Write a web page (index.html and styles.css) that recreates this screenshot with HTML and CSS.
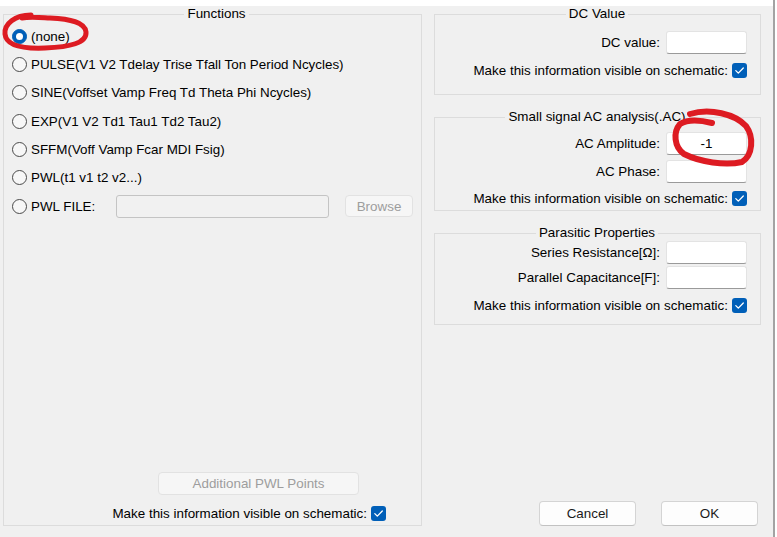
FILE: index.html
```html
<!DOCTYPE html>
<html>
<head>
<meta charset="utf-8">
<link rel="stylesheet" href="styles.css">
</head>
<body>
<div class="main">
  <div class="topstrip"></div>
  <div class="dialog">
    <fieldset class="group functions">
      <legend>Functions</legend>
      <div class="radios">
        <div class="radio-row"><span class="radio checked"></span><span>(none)</span></div>
        <div class="radio-row"><span class="radio"></span><span>PULSE(V1 V2 Tdelay Trise Tfall Ton Period Ncycles)</span></div>
        <div class="radio-row"><span class="radio"></span><span>SINE(Voffset Vamp Freq Td Theta Phi Ncycles)</span></div>
        <div class="radio-row"><span class="radio"></span><span>EXP(V1 V2 Td1 Tau1 Td2 Tau2)</span></div>
        <div class="radio-row"><span class="radio"></span><span>SFFM(Voff Vamp Fcar MDI Fsig)</span></div>
        <div class="radio-row"><span class="radio"></span><span>PWL(t1 v1 t2 v2...)</span></div>
        <div class="radio-row"><span class="radio"></span><span class="file-label">PWL FILE:</span><span class="file-input"></span><span class="btn disabled browse">Browse</span></div>
      </div>
      <div class="func-bottom">
        <span class="btn disabled addpwl">Additional PWL Points</span>
        <div class="check-row bottom-check"><span>Make this information visible on schematic:</span><span class="check"><svg viewBox="0 0 15 15" width="15" height="15"><path d="M3.8 7.6 L6.3 10.1 L11.3 5" fill="none" stroke="#fff" stroke-width="1.3" stroke-linecap="round" stroke-linejoin="round"/></svg></span></div>
      </div>
    </fieldset>

    <div class="right">
      <fieldset class="group dc">
        <legend>DC Value</legend>
        <div class="field-row"><span>DC value:</span><span class="input"></span></div>
        <div class="check-row gap8"><span>Make this information visible on schematic:</span><span class="check"><svg viewBox="0 0 15 15" width="15" height="15"><path d="M3.8 7.6 L6.3 10.1 L11.3 5" fill="none" stroke="#fff" stroke-width="1.3" stroke-linecap="round" stroke-linejoin="round"/></svg></span></div>
      </fieldset>

      <fieldset class="group ac">
        <legend>Small signal AC analysis(.AC)</legend>
        <div class="field-row"><span>AC Amplitude:</span><span class="input">-1</span></div>
        <div class="field-row gap5"><span>AC Phase:</span><span class="input"></span></div>
        <div class="check-row gap7"><span>Make this information visible on schematic:</span><span class="check"><svg viewBox="0 0 15 15" width="15" height="15"><path d="M3.8 7.6 L6.3 10.1 L11.3 5" fill="none" stroke="#fff" stroke-width="1.3" stroke-linecap="round" stroke-linejoin="round"/></svg></span></div>
      </fieldset>

      <fieldset class="group para">
        <legend>Parasitic Properties</legend>
        <div class="field-row"><span>Series Resistance[Ω]:</span><span class="input"></span></div>
        <div class="field-row gap2"><span>Parallel Capacitance[F]:</span><span class="input"></span></div>
        <div class="check-row gap8"><span>Make this information visible on schematic:</span><span class="check"><svg viewBox="0 0 15 15" width="15" height="15"><path d="M3.8 7.6 L6.3 10.1 L11.3 5" fill="none" stroke="#fff" stroke-width="1.3" stroke-linecap="round" stroke-linejoin="round"/></svg></span></div>
      </fieldset>

      <div class="spacer"></div>
      <div class="buttons">
        <span class="btn action">Cancel</span>
        <span class="btn action">OK</span>
      </div>
    </div>
  </div>
</div>
<div class="edge"></div>
<div class="rest"></div>

<svg class="annot" width="777" height="537" viewBox="0 0 777 537">
  <path d="M31 15 C15 15 4 24 5 34 C6 45 20 49 45 48 C70 47 87 43 86 32 C85 22 70 19 50 18 C40 17.5 30 16.5 22 18" fill="none" stroke="#dd1b22" stroke-width="5" stroke-linecap="round"/>
  <path d="M690 114 C710 108 735 114 746 126 C754 137 753 155 742 162 C725 166 700 162 684 154 C674 147 673 132 680 124 C688 119 700 120 712 123" fill="none" stroke="#dd1b22" stroke-width="6" stroke-linecap="round"/>
</svg>
</body>
</html>
```

FILE: styles.css
```css
* { box-sizing: border-box; }

html, body {
  margin: 0;
  padding: 0;
}

body {
  width: 777px;
  height: 537px;
  overflow: hidden;
  background: #ffffff;
  display: flex;
  position: relative;
  font-family: "Liberation Sans", Arial, sans-serif;
  font-size: 13.4px;
  color: #000;
}

.main {
  width: 773px;
  display: flex;
  flex-direction: column;
}

.topstrip {
  height: 6px;
  background: #ffffff;
}

.edge {
  width: 2px;
  background: #a3a3a3;
}

.rest {
  flex: 1;
  background: #ffffff;
}

.dialog {
  flex: 1;
  background: #f0f0f0;
  display: flex;
  gap: 12px;
  padding: 0 0 11px 3px;
}

.group {
  margin: 0;
  padding: 0;
  border: 1px solid #dcdcdc;
  min-width: 0;
}

.group legend {
  margin: 0 auto;
  padding: 0 3px;
  line-height: 16px;
  font-size: 13.4px;
}

/* Functions */
.functions {
  width: 419px;
  display: flex;
  flex-direction: column;
  padding-left: 8px;
}

.radios {
  display: flex;
  flex-direction: column;
}

.radio-row {
  height: 28.33px;
  display: flex;
  align-items: center;
}

.radio {
  width: 15px;
  height: 15px;
  border-radius: 50%;
  border: 1px solid #4a4a4a;
  background: #f7f7f7;
  margin-right: 4px;
  flex: none;
  display: flex;
  align-items: center;
  justify-content: center;
}

.radio.checked {
  background: #005fb8;
  border-color: #005fb8;
}

.radio.checked::after {
  content: "";
  width: 7px;
  height: 7px;
  border-radius: 50%;
  background: #fff;
}

.file-label {
  width: 85px;
}

.file-input {
  width: 213px;
  height: 23px;
  border: 1px solid #c4c4c4;
  border-radius: 3px;
  background: #f1f1f1;
}

.btn {
  display: flex;
  align-items: center;
  justify-content: center;
  border-radius: 4px;
}

.btn.disabled {
  background: #f6f6f6;
  border: 1px solid #e2e2e2;
  color: #9d9d9d;
}

.browse {
  margin-left: 16px;
  width: 68px;
  height: 22px;
}

.func-bottom {
  margin-top: auto;
  display: flex;
  flex-direction: column;
  align-items: flex-end;
  padding-bottom: 4px;
}

.addpwl {
  width: 201px;
  height: 23px;
  margin-right: 62px;
}

.bottom-check {
  margin-top: 10px;
  margin-right: 35px;
}

.check-row {
  display: flex;
  align-items: center;
  justify-content: flex-end;
  height: 16px;
  gap: 4px;
}

.check {
  width: 15px;
  height: 15px;
  border-radius: 3px;
  background: #005fb8;
  display: flex;
}

/* Right column */
.right {
  width: 327px;
  display: flex;
  flex-direction: column;
}

.dc {
  padding: 9px 13px 16px 12px;
}

.ac {
  margin-top: 14px;
  padding: 7px 13px 4px 12px;
}

.para {
  margin-top: 14px;
  padding: 0 13px 11px 12px;
}

.field-row {
  display: flex;
  align-items: center;
  justify-content: flex-end;
  gap: 6px;
}

.input {
  width: 81px;
  height: 23px;
  background: #fff;
  border: 1px solid #e3e3e3;
  border-bottom-color: #9a9a9a;
  border-radius: 3px;
  display: flex;
  align-items: center;
  justify-content: center;
}

.gap2 { margin-top: 2px; }
.gap5 { margin-top: 5px; }
.gap7 { margin-top: 7px; }
.gap8 { margin-top: 8px; }

.spacer {
  flex: 1;
}

.buttons {
  display: flex;
  justify-content: flex-end;
  gap: 25px;
  margin-right: 3px;
}

.btn.action {
  width: 97px;
  height: 25px;
  background: #fdfdfd;
  border: 1px solid #d4d4d4;
  border-bottom-color: #c2c2c2;
  color: #1a1a1a;
}

.annot {
  position: absolute;
  left: 0;
  top: 0;
  pointer-events: none;
}
```
